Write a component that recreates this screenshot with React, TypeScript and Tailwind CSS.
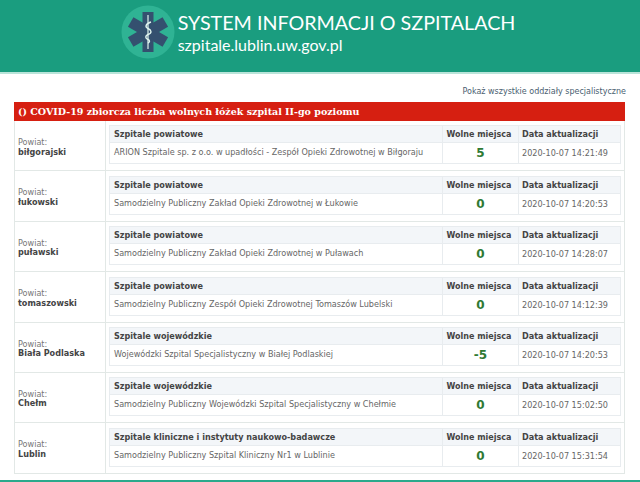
const rows = [
  { powiat: "biłgorajski", typ: "Szpitale powiatowe", nazwa: "ARION Szpitale sp. z o.o. w upadłości - Zespół Opieki Zdrowotnej w Biłgoraju", wolne: "5", data: "2020-10-07 14:21:49" },
  { powiat: "łukowski", typ: "Szpitale powiatowe", nazwa: "Samodzielny Publiczny Zakład Opieki Zdrowotnej w Łukowie", wolne: "0", data: "2020-10-07 14:20:53" },
  { powiat: "puławski", typ: "Szpitale powiatowe", nazwa: "Samodzielny Publiczny Zakład Opieki Zdrowotnej w Puławach", wolne: "0", data: "2020-10-07 14:28:07" },
  { powiat: "tomaszowski", typ: "Szpitale powiatowe", nazwa: "Samodzielny Publiczny Zespół Opieki Zdrowotnej Tomaszów Lubelski", wolne: "0", data: "2020-10-07 14:12:39" },
  { powiat: "Biała Podlaska", typ: "Szpitale wojewódzkie", nazwa: "Wojewódzki Szpital Specjalistyczny w Białej Podlaskiej", wolne: "-5", data: "2020-10-07 14:20:53" },
  { powiat: "Chełm", typ: "Szpitale wojewódzkie", nazwa: "Samodzielny Publiczny Wojewódzki Szpital Specjalistyczny w Chełmie", wolne: "0", data: "2020-10-07 15:02:50" },
  { powiat: "Lublin", typ: "Szpitale kliniczne i instytuty naukowo-badawcze", nazwa: "Samodzielny Publiczny Szpital Kliniczny Nr1 w Lublinie", wolne: "0", data: "2020-10-07 15:31:54" },
];

function Logo() {
  return (
    <svg width="54" height="54" viewBox="0 0 54 54" className="shrink-0">
      <circle cx="27" cy="27" r="26.5" fill="#2fb394" />
      <g fill="#34506f">
        <rect x="21.5" y="7" width="11" height="40" />
        <rect x="21.5" y="7" width="11" height="40" transform="rotate(60 27 27)" />
        <rect x="21.5" y="7" width="11" height="40" transform="rotate(-60 27 27)" />
      </g>
      <path d="M27 10V44" stroke="#dff3ee" strokeWidth="1.2" />
      <path d="M30 17C24 19 24 22 27 23.5C31 25.5 31 28 27 29.5C24 31 24 33 27 34.5C29 35.5 29 37 27 38" stroke="#dff3ee" strokeWidth="1.4" fill="none" />
    </svg>
  );
}

function Row({ powiat, typ, nazwa, wolne, data }: (typeof rows)[number]) {
  return (
    <div className="flex h-[50.4px] border-b border-[#e2e8e6]">
      <div className="w-[91px] shrink-0 border-r border-[#e2e8e6] pl-[3px] pt-[17px] leading-[9.5px] text-[#777]">
        <div>Powiat:</div>
        <div className="font-bold text-[#444]">{powiat}</div>
      </div>
      <div className="flex-1 pl-[3px] pr-[3px] pt-[4.4px]">
        <div className="grid grid-cols-[333px_76px_1fr] border border-[#e8ecef] text-[#444]">
          <div className="h-[17px] bg-[#f3f6f9] border-r border-b border-[#e8ecef] pl-1 font-bold leading-[17px]">{typ}</div>
          <div className="h-[17px] bg-[#f3f6f9] border-r border-b border-[#e8ecef] pr-[3px] text-center text-[8px] font-bold leading-[17px]">Wolne miejsca</div>
          <div className="h-[17px] bg-[#f3f6f9] border-b border-[#e8ecef] pl-[3px] font-bold leading-[17px]">Data aktualizacji</div>
          <div className="h-[20px] border-r border-[#e8ecef] pl-1 whitespace-nowrap text-[#666] leading-[18px]">{nazwa}</div>
          <div className="h-[20px] border-r border-[#e8ecef] text-center text-[12px] font-bold leading-[20px] text-[#2f7a34]">{wolne}</div>
          <div className="h-[20px] pl-[3px] text-[#666] leading-[20px]">{data}</div>
        </div>
      </div>
    </div>
  );
}

export default function App() {
  return (
    <div className="h-[482px] w-[640px] overflow-hidden bg-white font-['DejaVu_Sans',sans-serif] text-[8.1px]">
      <header className="flex h-[72px] items-start justify-center bg-[#1a9d7f] pt-[5px] pr-[4px]">
        <div className="flex items-center gap-[3px]">
          <Logo />
          <div className="text-white font-['Lato',sans-serif]">
            <div className="text-[19.7px] leading-[26px]">SYSTEM INFORMACJI O SZPITALACH</div>
            <div className="text-[16px] leading-[18px]">szpitale.lublin.uw.gov.pl</div>
          </div>
        </div>
      </header>
      <div className="h-[410px] border-t-[2px] border-[#b9e4d9] border-b-[2px] border-b-[#2aa98c] pl-[14px] pr-[15px]">
        <div className="h-[28px] pt-[12px] text-right text-[8px] leading-[11px] text-[#4a6070]">
          <a className="mr-[-1px]">Pokaż wszystkie oddziały specjalistyczne</a>
        </div>
        <div className="h-[19px] bg-[#d61f11] pl-1 text-[9.5px] font-bold leading-[19px] text-white font-['DejaVu_Serif',serif]">
          () COVID-19 zbiorcza liczba wolnych łóżek szpital II-go poziomu
        </div>
        <div className="border-l border-r border-[#e2e8e6]">
          {rows.map((r) => (
            <Row key={r.powiat} {...r} />
          ))}
        </div>
      </div>
    </div>
  );
}
